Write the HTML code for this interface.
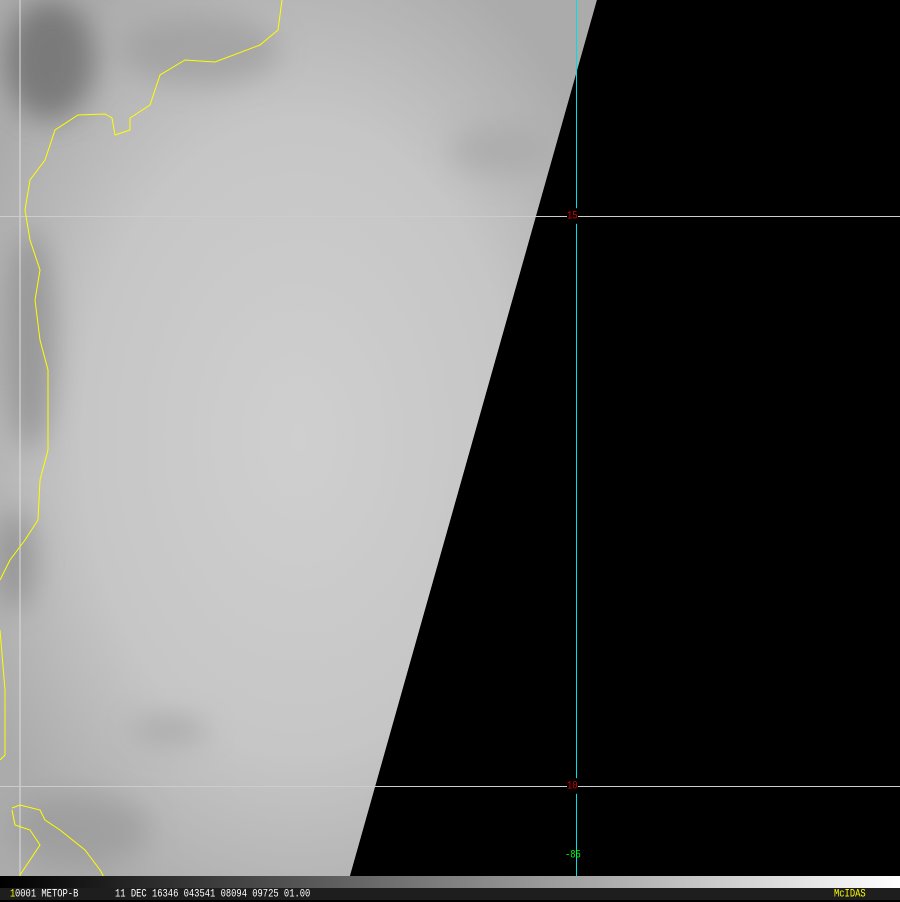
<!DOCTYPE html>
<html><head><style>
body{margin:0;width:900px;height:900px;background:#000;overflow:hidden;position:relative;font-family:"Liberation Mono",monospace}
svg{position:absolute;left:0;top:0}
.t{position:absolute;font-size:8.8px;line-height:12px;white-space:pre;transform:scaleY(1.3);transform-origin:0 50%}
</style></head><body>
<svg width="900" height="900">
<defs>
<linearGradient id="g" x1="0" y1="0" x2="1" y2="0">
<stop offset="0" stop-color="#000"/><stop offset="1" stop-color="#fff"/></linearGradient>
<radialGradient id="c" cx="0.5" cy="0.5" r="0.6">
<stop offset="0" stop-color="#cfcfcf"/><stop offset="0.6" stop-color="#c6c6c6"/><stop offset="1" stop-color="#ababab"/></radialGradient>
<filter id="b"><feGaussianBlur stdDeviation="14"/></filter>
</defs>
<polygon points="0,0 597,0 350,876 0,876" fill="url(#c)"/>
<g filter="url(#b)" opacity="0.7">
<ellipse cx="50" cy="60" rx="45" ry="60" fill="#666"/>
<ellipse cx="30" cy="340" rx="25" ry="110" fill="#8a8a8a"/>
<ellipse cx="15" cy="560" rx="20" ry="50" fill="#8a8a8a"/>
<ellipse cx="200" cy="50" rx="80" ry="35" fill="#9c9c9c"/>
<ellipse cx="500" cy="150" rx="50" ry="25" fill="#a8a8a8"/>
<ellipse cx="80" cy="830" rx="70" ry="35" fill="#9a9a9a"/>
<ellipse cx="170" cy="730" rx="40" ry="12" fill="#9e9e9e"/>
</g>
<polygon points="597,0 900,0 900,876 350,876" fill="#000"/>
<line x1="20" y1="0" x2="20" y2="876" stroke="#ddd" stroke-width="1"/>
<line x1="0" y1="216.5" x2="900" y2="216.5" stroke="#ccc" stroke-width="1"/>
<line x1="0" y1="786.5" x2="900" y2="786.5" stroke="#ccc" stroke-width="1"/>
<line x1="576.5" y1="0" x2="576.5" y2="888" stroke="#00e0e0" stroke-width="1"/>
<polyline fill="none" stroke="#ffff00" stroke-width="1" points="282,0 278,30 260,45 215,62 185,60 160,75 150,105 130,118 130,130 115,135 112,118 105,114 78,115 55,130 45,160 30,180 25,210 30,240 40,270 35,300 40,340 48,370 48,410 48,450 40,480 38,520 25,540 10,560 0,580"/>
<polyline fill="none" stroke="#ffff00" stroke-width="1" points="0,630 5,690 5,755 0,760"/>
<polyline fill="none" stroke="#ffff00" stroke-width="1" points="12,808 20,805 40,810 45,820 60,830 85,850 100,870 110,888"/>
<polyline fill="none" stroke="#ffff00" stroke-width="1" points="12,810 15,825 30,830 40,845 30,860 20,875 15,888"/>
<rect x="0" y="876" width="900" height="12" fill="url(#g)"/>
<rect x="0" y="888" width="900" height="12" fill="#1e1e1e"/>
</svg>
<div class="t" style="left:567px;top:210px;color:#e00000;background:#000">15</div>
<div class="t" style="left:567px;top:780px;color:#e00000;background:#000">10</div>
<div class="t" style="left:565px;top:849px;color:#00ff00">-85</div>
<div class="t" style="left:10px;top:888px;color:#ffff00">1</div>
<div class="t" style="left:15px;top:888px;color:#fff">0001 METOP-B</div>
<div class="t" style="left:115px;top:888px;color:#fff">11 DEC 16346 043541 08094 09725 01.00</div>
<div class="t" style="left:834px;top:888px;color:#ffff00">McIDAS</div>
</body></html>
